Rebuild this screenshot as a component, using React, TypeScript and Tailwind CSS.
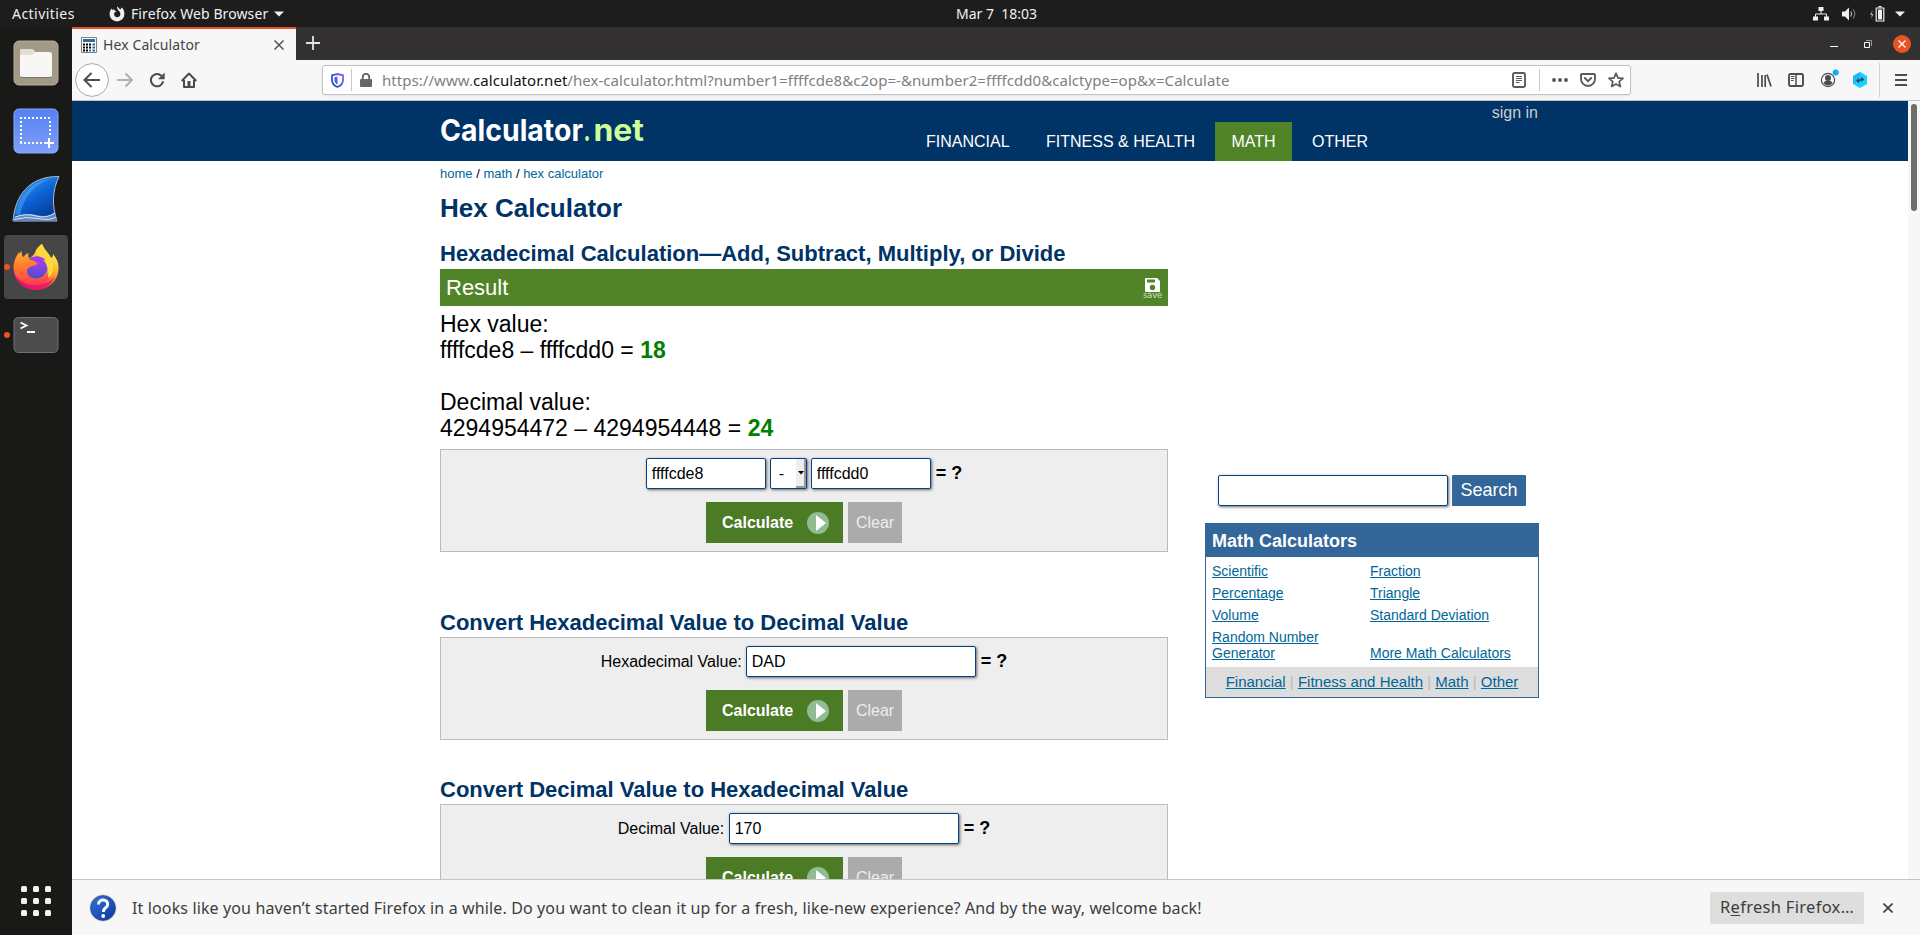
import React from 'react';
import type { ReactNode } from 'react';

const UI = "font-['Noto_Sans','Open_Sans',sans-serif]";

function TopBar() {
  return (
    <div className={`flex h-[27px] shrink-0 items-center bg-[#1d1d1d] text-[14px] leading-none text-[#f0f0f0] ${UI}`}>
      <span className="ml-3 w-[97px] whitespace-pre tracking-[0.45px]">Activities</span>
      <svg width="16" height="16" viewBox="0 0 16 16">
        <path
          d="M8 .5 C10 1.6 9.6 2.6 11.4 3.4 L12.8 1.6 C14.6 3 15.4 5.4 15.4 8 A7.4 7.4 0 0 1 .6 8 C.6 5.6 1.6 3.8 2.8 2.6 L3.4 4 L5.2 3.2 L5.8 4.8 L7.6 5.4 L5.6 6.6 C4.2 8.6 5.8 11.2 8.2 11.2 C11 11.2 12.2 8.4 10.8 6 C10 4.8 7.8 3.4 8 .5Z"
          fill="#f0f0f0"
        />
      </svg>
      <span className="ml-[6px] w-[143px] whitespace-pre tracking-[0.1px]">Firefox Web Browser</span>
      <svg width="10" height="6" viewBox="0 0 10 6">
        <path d="M0 .5H10L5 5.5Z" fill="#f0f0f0" />
      </svg>
      <span className="ml-[672px] w-[90px] whitespace-pre">{'Mar 7  18:03'}</span>
      <div className="ml-auto mr-[15px] flex items-center">
        <svg width="16" height="14" viewBox="0 0 16 14">
          <path d="M5.5 0h5v4h-5zM0 9.5h5v4H0zM11 9.5h5v4h-5z" fill="#f0f0f0" />
          <path d="M8 4v3M2.5 10V7h11v3" fill="none" stroke="#f0f0f0" strokeWidth="1" />
        </svg>
        <svg className="ml-[12px]" width="16" height="14" viewBox="0 0 16 14">
          <path d="M1 4.5h3L8 .5v13L4 9.5H1z" fill="#f0f0f0" />
          <path d="M9.8 4.5q1.6 2.5 0 5" fill="none" stroke="#c0c0c0" strokeWidth="1.2" />
          <path d="M12 2.5q3.6 4.5 0 9" fill="none" stroke="#777" strokeWidth="1.2" />
        </svg>
        <svg className="ml-[12px]" width="16" height="16" viewBox="0 0 16 16">
          <path d="M3.5 4 1 9h1.8L2 13l2.8-5H3z" fill="#999" />
          <path d="M7.2 2h7.6v13H7.2z" fill="none" stroke="#f0f0f0" strokeWidth="1.2" />
          <path d="M9 3.5h4v10H9zM9.5 0h3v1.5h-3z" fill="#f0f0f0" />
        </svg>
        <svg className="ml-[10px]" width="10" height="6" viewBox="0 0 10 6">
          <path d="M0 .5H10L5 5.5Z" fill="#f0f0f0" />
        </svg>
      </div>
    </div>
  );
}

function DockItem({ children, active, running }: { children: ReactNode; active?: boolean; running?: boolean }) {
  return (
    <div className="relative flex h-[68px] w-[72px] items-center justify-center">
      {active && <div className="absolute left-1 top-[2px] h-16 w-16 rounded-[4px] bg-[#464646]" />}
      {running && <div className="absolute left-1 top-[31px] h-[6px] w-[6px] rounded-full bg-[#e95420]" />}
      <div className="relative">{children}</div>
    </div>
  );
}

function FirefoxLogo() {
  return (
    <svg width="46" height="48" viewBox="0 0 46 48" className="block">
      <defs>
        <linearGradient id="fxBody" x1="0.8" y1="0.1" x2="0.25" y2="1">
          <stop offset="0" stopColor="#fff44f" />
          <stop offset="0.35" stopColor="#ffb02e" />
          <stop offset="0.65" stopColor="#ff5a3c" />
          <stop offset="1" stopColor="#e3087f" />
        </linearGradient>
        <radialGradient id="fxGlobe" cx="0.6" cy="0.25" r="0.8">
          <stop offset="0" stopColor="#a83cf0" />
          <stop offset="1" stopColor="#4a50c8" />
        </radialGradient>
        <linearGradient id="fxEar" x1="0" y1="0" x2="0.1" y2="1">
          <stop offset="0" stopColor="#ffb52e" />
          <stop offset="0.45" stopColor="#ff7a2e" />
          <stop offset="1" stopColor="#ff3c50" />
        </linearGradient>
      </defs>
      <path d="M29 1C31 7 36 10 38 15C40 14 40 12 40 11C44 16 46 20 45.5 26C45 38 35 47 23 47C10 47 .5 37 .5 25C.5 19 3 13 6 9C6 14 8 16 12 17C18 16 22 11 23 7C25 4 27 2 29 1Z" fill="url(#fxBody)" />
      <circle cx="23.5" cy="24.5" r="11" fill="url(#fxGlobe)" />
      <path d="M.8 22C2 15 5 12 8.500 8C9 11 9 13 10.500 14C12 12 13.500 10.500 15.500 10C15 13 15.500 15.500 17.500 17C21 17.500 24 19 24.500 20.500C22.500 23.500 17 22.500 14.500 26C13 30 15 34 19 36C26 38.500 34 35 36 27C39 35 34 43 23 43C10 43 0 35 .8 22Z" fill="url(#fxEar)" />
      <path d="M29 1C31 7 36 10 38 15C42 22 41 31 35 35C36 27 34 20 29 16C25 13 24 11 23 9C25 5 27 3 29 1Z" fill="#ffd93b" />
      <path d="M17 16.500C21 12.500 29 12 33 17.500C30.500 16.500 28 16 25 18C23 18 20 17 17 16.500Z" fill="#a63bea" />
      <path d="M3 33C10 44 33 46 42 33C38 43 31 47 23 47C14 47 7 42 3 33Z" fill="#e80f70" opacity=".75" />
    </svg>
  );
}

function Dock() {
  return (
    <div className="flex w-[72px] shrink-0 flex-col bg-[#191917] pt-[2px]">
      <DockItem>
        <svg width="46" height="46" viewBox="0 0 46 46" className="block">
          <rect x="1" y="1" width="44" height="44" rx="5" fill="#a29a86" stroke="#b5ae9c" />
          <path d="M7 15V11q0-2 2-2h10l3 3h12v5z" fill="#e2ded4" />
          <rect x="7" y="12" width="32" height="25" rx="2.500" fill="#f8f7f5" />
          <path d="M7 12V11q0-2 2-2h10q2 0 3 3l-3 3H7z" fill="#e2ded4" />
          <path d="M8 37.500h30" stroke="#7d7564" />
        </svg>
      </DockItem>
      <DockItem>
        <svg width="46" height="46" viewBox="0 0 46 46" className="block">
          <defs>
            <linearGradient id="shot" x1="0" y1="0" x2="0" y2="1">
              <stop offset="0" stopColor="#5480f2" />
              <stop offset="1" stopColor="#7ea0fa" />
            </linearGradient>
          </defs>
          <rect x="1" y="1" width="44" height="44" rx="5" fill="url(#shot)" stroke="#8cabff" />
          <path d="M7 10H38M7 35H31M8 13V34M37 13V29" fill="none" stroke="#fff" strokeWidth="2" strokeDasharray="2 2" />
          <path d="M36 30v10M31 35h10" stroke="#fff" strokeWidth="2" />
        </svg>
      </DockItem>
      <DockItem>
        <svg width="48" height="46" viewBox="0 0 48 46" className="block">
          <defs>
            <linearGradient id="fin" x1="0.2" y1="0" x2="0.8" y2="1">
              <stop offset="0" stopColor="#2f9cf5" />
              <stop offset="0.5" stopColor="#0b5fd0" />
              <stop offset="1" stopColor="#063488" />
            </linearGradient>
          </defs>
          <path d="M1 45C3 20 17 0 47 .5C40 15 40 30 45 45Z" fill="url(#fin)" stroke="#aebbd0" strokeWidth="1" />
          <path d="M3 38C8 18 20 5 38 3C22 9 12 20 8 39Z" fill="#5bb4fa" opacity=".45" />
          <path d="M2 41Q14 36 25 39T43 36L45 45H1Z" fill="#5f87c8" />
          <path d="M3 41Q14 37 24 40T43 37M2 43.500Q14 40 26 42.500T44 41" fill="none" stroke="#dce8f8" strokeWidth="1" />
        </svg>
      </DockItem>
      <DockItem active running>
        <FirefoxLogo />
      </DockItem>
      <DockItem running>
        <svg width="46" height="38" viewBox="0 0 46 38" className="block">
          <rect x="1" y="1.500" width="44" height="35" rx="4.500" fill="#4c4c4c" stroke="#727272" />
          <path d="M7.500 6.500 13.500 9.500 7.500 12.500M14 16h8" fill="none" stroke="#fff" strokeWidth="1.800" />
        </svg>
      </DockItem>
      <div className="mb-[19px] ml-[21px] mt-auto grid w-[30px] grid-cols-3 gap-[6px]">
        {Array.from({ length: 9 }, (_, i) => (
          <span key={i} className="h-[6px] w-[6px] rounded-[1.5px] bg-[#f2f2f0]" />
        ))}
      </div>
    </div>
  );
}

function TabStrip() {
  return (
    <div className="flex h-[33px] shrink-0 bg-[#333031]">
      <div className="flex w-[224px] items-center border-t-2 border-[#e95420] bg-[#f7f7f7]">
        <svg className="ml-[9px]" width="16" height="16" viewBox="0 0 16 16">
          <path d="M.5.5h15v15H.5z" fill="#fff" stroke="#808080" />
          <path d="M2 2h12v3H2z" fill="#336699" />
          <path d="M2 6.500h2v2H2zM5 6.500h2v2H5zM8 6.500h2v2H8zM2 9.500h2v2H2zM5 9.500h2v2H5zM8 9.500h2v2H8zM2 12.500h2v2H2zM5 12.500h2v2H5z" fill="#000" />
          <path d="M11.500 6.500h2.500v2h-2.500zM11.500 9.500h2.500v2h-2.500zM11.500 12.500h2.500v2h-2.500zM8 12.500h2v2H8z" fill="#336699" />
        </svg>
        <span className={`ml-[6px] w-[171px] text-[14px] leading-none tracking-[0.1px] text-[#444] ${UI}`}>Hex Calculator</span>
        <svg width="10" height="10" viewBox="0 0 10 10">
          <path d="M.5.5l9 9M9.500.5l-9 9" stroke="#555" strokeWidth="1.500" />
        </svg>
      </div>
      <svg className="ml-[10px] mt-[9px]" width="14" height="14" viewBox="0 0 14 14">
        <path d="M7 0v14M0 7h14" stroke="#e4e4e4" strokeWidth="1.800" />
      </svg>
      <div className="ml-auto mr-[9px] flex items-center">
        <svg width="8" height="6" viewBox="0 0 8 6">
          <path d="M0 5.500h8" stroke="#fff" />
        </svg>
        <svg className="ml-[26px]" width="8" height="8" viewBox="0 0 8 8">
          <path d="M.5 2.500h5v5h-5z" fill="none" stroke="#fff" />
          <path d="M2 .5h5.500V6" fill="none" stroke="#999" />
        </svg>
        <svg className="ml-[21px]" width="18" height="18" viewBox="0 0 18 18">
          <circle cx="9" cy="9" r="9" fill="#e95420" />
          <path d="M5.500 5.500l7 7M12.500 5.500l-7 7" stroke="#fff" strokeWidth="1.300" />
        </svg>
      </div>
    </div>
  );
}

function Toolbar() {
  return (
    <div className="flex h-[41px] shrink-0 items-center border-b border-[#c4c4c4] bg-[#f7f7f7]">
      <svg className="ml-[3px]" width="34" height="34" viewBox="0 0 34 34">
        <circle cx="17" cy="17" r="16.400" fill="#fff" stroke="#aaa" />
        <path d="M25 17H10M16.500 10 9.500 17l7 7" fill="none" stroke="#4c4c4c" strokeWidth="2" />
      </svg>
      <svg className="ml-[8px]" width="16" height="16" viewBox="0 0 16 16">
        <path d="M0 8h15M8.500 1.500 15 8l-6.500 6.500" fill="none" stroke="#b0b0b0" strokeWidth="2" />
      </svg>
      <svg className="ml-[16px]" width="16" height="16" viewBox="0 0 16 16">
        <path d="M14.200 9.300A6.200 6.200 0 1 1 12.500 3.700" fill="none" stroke="#4c4c4c" strokeWidth="2" />
        <path d="M15.600.6v6.600H9z" fill="#4c4c4c" />
      </svg>
      <svg className="ml-[16px]" width="16" height="16" viewBox="0 0 16 16">
        <path d="M.7 9 8 1.500 15.300 9M3 8v7h10V8" fill="none" stroke="#4c4c4c" strokeWidth="2" strokeLinejoin="round" />
        <path d="M6.500 9h3v6h-3z" fill="#4c4c4c" />
      </svg>
      <div className="ml-[125px] flex h-[30px] w-[1309px] items-center rounded-[3px] border border-[#c2c2c2] bg-white shadow-[0_1px_3px_rgba(0,0,0,0.08)]">
        <svg className="ml-[8px]" width="13" height="15" viewBox="0 0 13 15">
          <defs>
            <linearGradient id="shield" x1="1" y1="0" x2="0" y2="1">
              <stop offset="0" stopColor="#9059ff" />
              <stop offset="1" stopColor="#0250bb" />
            </linearGradient>
          </defs>
          <path d="M6.500 1 12 2.300V6.500C12 10.500 9.500 13 6.500 14C3.500 13 1 10.500 1 6.500V2.300Z" fill="none" stroke="url(#shield)" strokeWidth="1.800" />
          <path d="M6.500 3.500V11.500C4.500 10.500 3.500 9 3.500 6.500V4.200Z" fill="url(#shield)" />
        </svg>
        <span className="ml-[7px] h-[22px] w-px bg-[#c8c8c8]" />
        <svg className="ml-[8px]" width="12" height="14" viewBox="0 0 12 14">
          <path d="M2.800 7V4a3.200 3.200 0 0 1 6.400 0v3" fill="none" stroke="#666" strokeWidth="1.900" />
          <rect x="0" y="6" width="12" height="8" rx="1" fill="#666" />
        </svg>
        <span className={`ml-[10px] w-[1130px] whitespace-pre text-[15px] leading-none tracking-[0.045px] text-[#808080] ${UI}`}>
          https://www.<span className="text-[#111]">calculator.net</span>/hex-calculator.html?number1=ffffcde8&amp;c2op=-&amp;number2=ffffcdd0&amp;calctype=op&amp;x=Calculate
        </span>
        <svg width="14" height="16" viewBox="0 0 14 16">
          <rect x="1" y="1" width="12" height="14" rx="1.500" fill="none" stroke="#5a5a5a" strokeWidth="1.900" />
          <path d="M4 4.500h6M4 6.500h6M4 8.500h6M4 10.500h3.500" stroke="#5a5a5a" />
        </svg>
        <span className="ml-[13px] h-[22px] w-px bg-[#c8c8c8]" />
        <svg className="ml-[12px]" width="16" height="4" viewBox="0 0 16 4">
          <circle cx="2" cy="2" r="2" fill="#5a5a5a" />
          <circle cx="8" cy="2" r="2" fill="#5a5a5a" />
          <circle cx="14" cy="2" r="2" fill="#5a5a5a" />
        </svg>
        <svg className="ml-[12px]" width="16" height="14" viewBox="0 0 16 14">
          <path d="M2 1h12q1 0 1 1v4a7 7 0 0 1-14 0V2q0-1 1-1z" fill="none" stroke="#5a5a5a" strokeWidth="1.900" />
          <path d="M4.800 5 8 8.200 11.200 5" fill="none" stroke="#5a5a5a" strokeWidth="1.900" strokeLinecap="round" />
        </svg>
        <svg className="ml-[12px]" width="16" height="16" viewBox="0 0 16 16">
          <path d="M8 1.300 10 5.900 15 6.400 11.200 9.700 12.400 14.600 8 12 3.600 14.600 4.800 9.700 1 6.400 6 5.900Z" fill="none" stroke="#5a5a5a" strokeWidth="1.700" strokeLinejoin="round" />
        </svg>
      </div>
      <div className="ml-auto mr-[13px] flex items-center">
        <svg width="15" height="14" viewBox="0 0 15 14">
          <path d="M1 0v14M5 2v12M8.200 2v12M10 1.500l4 12" stroke="#4c4c4c" strokeWidth="1.700" />
        </svg>
        <svg className="ml-[16px]" width="16" height="14" viewBox="0 0 16 14">
          <rect x="1" y="1" width="14" height="12" rx="1.500" fill="none" stroke="#4c4c4c" strokeWidth="1.900" />
          <path d="M8 1v12" stroke="#4c4c4c" strokeWidth="1.500" />
          <path d="M3 3.500h3.500M3 5.500h3.500M3 7.500h2.500" stroke="#4c4c4c" />
        </svg>
        <svg className="mb-[4px] ml-[16px]" width="19" height="20" viewBox="0 0 19 20">
          <circle cx="8" cy="12" r="6.600" fill="none" stroke="#4c4c4c" strokeWidth="1.200" />
          <circle cx="8" cy="10" r="3" fill="#4c4c4c" />
          <path d="M3.500 15q1-2.500 4.500-2.500t4.500 2.500q-2 2.500-4.500 2.500T3.500 15z" fill="#4c4c4c" />
          <circle cx="15.700" cy="4.600" r="3" fill="#00b0ff" />
        </svg>
        <svg className="ml-[13px]" width="16" height="16" viewBox="0 0 16 16">
          <path d="M8 0 15 4v8l-7 4-7-4V4z" fill="#12d4ff" />
          <path d="M1 4 8 0v8l-7 4z" fill="#22b4ff" />
          <path d="M4 8.700 7 6v1.700h1.500v1.800H7v1.800zM12.300 7.500 9.300 4.800v1.700H8v1.900h1.300v1.700z" fill="#33455c" />
        </svg>
        <span className="ml-[11px] h-[34px] w-px bg-[#d4d4d4]" />
        <svg className="ml-[15px]" width="12" height="12" viewBox="0 0 12 12">
          <path d="M0 1h12M0 6h12M0 11h12" stroke="#4c4c4c" strokeWidth="2" />
        </svg>
      </div>
    </div>
  );
}

function SiteHeader() {
  return (
    <div className="flex h-[60px] shrink-0 justify-center bg-[#003366]">
      <div className="flex w-[1100px]">
        <svg width="210" height="60" viewBox="0 0 210 60" className="shrink-0">
          <g fontFamily="Inter, 'Liberation Sans', sans-serif" fontWeight="700" fontSize="30">
            <text x="0" y="40" textLength="143" lengthAdjust="spacingAndGlyphs" fill="#fff">Calculator</text>
            <text x="143.500" y="40" textLength="7" lengthAdjust="spacingAndGlyphs" fill="#ccff99">.</text>
            <text x="153.500" y="40" textLength="50.500" lengthAdjust="spacingAndGlyphs" fill="#ccff99">net</text>
          </g>
        </svg>
        <div className="flex flex-1 flex-col">
          <a className="mr-[2px] mt-[3px] self-end text-[16px] leading-[18px] text-[#ccc]">sign in</a>
          <nav className="ml-[260px] flex h-[39px] text-[16px] leading-[39px] text-white">
            <a className="w-[96px] pl-4">FINANCIAL</a>
            <a className="ml-[24px] w-[185px] whitespace-nowrap pl-4">FITNESS &amp; HEALTH</a>
            <a className="w-[77px] bg-[#518428] text-center">MATH</a>
            <a className="pl-5">OTHER</a>
          </nav>
        </div>
      </div>
    </div>
  );
}

const field = 'h-[31px] rounded-[2px] border border-[#044284] bg-white pl-[5px] text-[16px] leading-[29px] shadow-[1px_1px_3px_#666]';

function CalcButtons() {
  return (
    <div className="mt-[13px] flex justify-center gap-[5px]">
      <button className="flex h-[41px] w-[137px] items-center bg-[#4c7b25] pl-[16px] text-[16px] font-bold text-white">
        Calculate
        <svg className="ml-[14px]" width="22" height="22" viewBox="0 0 22 22">
          <circle cx="11" cy="11" r="11" fill="#90bc93" />
          <path d="M9 3v16l10-8z" fill="#fff" />
        </svg>
      </button>
      <button className="h-[41px] w-[54px] bg-[#ababab] text-[16px] text-[#eee]">Clear</button>
    </div>
  );
}

function Panel({ children }: { children: ReactNode }) {
  return (
    <div className="h-[103px] border border-[#bbb] bg-[#eee] pt-[8px]">
      <div className="flex justify-center">
        {children}
        <b className="ml-[5px] mt-[5px] text-[18px] leading-[21px]">= ?</b>
      </div>
      <CalcButtons />
    </div>
  );
}

function H2({ children }: { children: ReactNode }) {
  return <h2 className="text-[22px] font-bold leading-[26px] text-[#003366]">{children}</h2>;
}

function Main() {
  return (
    <div className="w-[728px]">
      <div className="mt-[5px] text-[13px] leading-[16px]">
        <a className="text-[#006699]">home</a> / <a className="text-[#006699]">math</a> / <a className="text-[#006699]">hex calculator</a>
      </div>
      <h1 className="mt-[11px] text-[26px] font-bold leading-[30px] text-[#003366]">Hex Calculator</h1>
      <div className="mt-[18px]">
        <H2>Hexadecimal Calculation—Add, Subtract, Multiply, or Divide</H2>
      </div>
      <div className="mt-[2px] flex h-[37px] items-center justify-between bg-[#518428] pl-[6px] pr-[6px] text-[22px] leading-none text-white">
        <span>Result</span>
        <span className="flex flex-col items-center pt-[1px]">
          <svg width="15" height="14" viewBox="0 0 15 14">
            <path d="M1 0h11l3 3v11H1q-1 0-1-1V1q0-1 1-1z" fill="#fff" />
            <path d="M2 1.500h8v3H2z" fill="#518428" />
            <circle cx="7.500" cy="9.500" r="2.700" fill="#518428" />
          </svg>
          <span className="font-['DejaVu_Sans',sans-serif] text-[8.5px] leading-[7px] tracking-[-0.2px] text-[#cfe0c0]">save</span>
        </span>
      </div>
      <div className="mt-[5px] text-[23px] leading-[26px]">
        <p>Hex value:</p>
        <p>ffffcde8 – ffffcdd0 = <b className="text-[#008000]">18</b></p>
        <p>&nbsp;</p>
        <p>Decimal value:</p>
        <p>4294954472 – 4294954448 = <b className="text-[#008000]">24</b></p>
      </div>
      <div className="mt-[8px]">
        <Panel>
          <div className={`${field} w-[120px]`}>ffffcde8</div>
          <div className="ml-[4px] flex h-[31px] w-[37px] justify-between rounded-[2px] border border-[#044284] bg-white pl-[8px] text-[16px] leading-[29px] shadow-[1px_1px_3px_#666]">
            -
            <span className="flex h-[29px] w-[10px] items-center border-b-2 border-r-2 border-b-[#999] border-r-[#999] bg-[#eee] pl-[2px]">
              <svg width="6" height="4" viewBox="0 0 6 4" className="shrink-0">
                <path d="M0 0h6L3 3.500z" fill="#000" />
              </svg>
            </span>
          </div>
          <div className={`${field} ml-[4px] w-[120px]`}>ffffcdd0</div>
        </Panel>
      </div>
      <div className="mt-[58px]">
        <H2>Convert Hexadecimal Value to Decimal Value</H2>
      </div>
      <div className="mt-[1px]">
        <Panel>
          <span className="mr-[4px] text-[16px] leading-[31px]">Hexadecimal Value:</span>
          <div className={`${field} w-[230px]`}>DAD</div>
        </Panel>
      </div>
      <div className="mt-[37px]">
        <H2>Convert Decimal Value to Hexadecimal Value</H2>
      </div>
      <div className="mt-[1px]">
        <Panel>
          <span className="mr-[4.5px] text-[16px] leading-[31px]">Decimal Value:</span>
          <div className={`${field} w-[230px]`}>170</div>
        </Panel>
      </div>
    </div>
  );
}

function Sidebar() {
  const rows = [
    ['Scientific', 'Fraction'],
    ['Percentage', 'Triangle'],
    ['Volume', 'Standard Deviation'],
    ['Random Number Generator', 'More Math Calculators'],
  ];
  const footer = ['Financial', 'Fitness and Health', 'Math', 'Other'];
  return (
    <div className="ml-[37px] mt-[314px] w-[334px]">
      <div className="flex gap-[4px] pl-[13px]">
        <div className={`${field} w-[230px]`} />
        <button className="h-[31px] w-[74px] rounded-[1px] bg-[#336699] text-[18px] leading-[31px] text-white">Search</button>
      </div>
      <div className="mt-[17px] border border-[#336699]">
        <div className="h-[33px] bg-[#336699] pl-[6px] text-[18px] font-bold leading-[34px] text-white">Math Calculators</div>
        <div className="flex h-[110px] flex-col gap-y-[6px] pl-[6px] pt-[6px] text-[14px] leading-[16px] text-[#006699] underline">
          {rows.map(([a, b]) => (
            <div key={a} className="flex items-end">
              <a className="w-[158px] pr-[40px]">{a}</a>
              <a>{b}</a>
            </div>
          ))}
        </div>
        <div className="flex h-[30px] justify-center whitespace-pre bg-[#ddd] text-[15px] leading-[30px] text-[#bbb]">
          {footer.map((f, i) => (
            <span key={f}>
              {i > 0 && ' | '}
              <a className="text-[#006699] underline">{f}</a>
            </span>
          ))}
        </div>
      </div>
    </div>
  );
}

function NotificationBar() {
  return (
    <div className={`flex h-[56px] shrink-0 items-center border-t border-[#c4c4c4] bg-[#f7f7f7] text-[16px] leading-none text-[#3d3d3d] ${UI}`}>
      <svg className="ml-[17px]" width="28" height="28" viewBox="0 0 28 28">
        <defs>
          <linearGradient id="help" x1="0" y1="0" x2="1" y2="1">
            <stop offset="0" stopColor="#3b74d8" />
            <stop offset="0.5" stopColor="#1e55c0" />
            <stop offset="1" stopColor="#0a3a9c" />
          </linearGradient>
        </defs>
        <circle cx="14" cy="14" r="13.500" fill="#c9cac8" />
        <circle cx="14" cy="14" r="12.300" fill="url(#help)" stroke="#173f94" strokeWidth=".8" />
        <path d="M9.500 10.500C9.500 4.500 19 4.500 18.700 10.500C18.500 14 14.300 13.600 14.300 18" fill="none" stroke="#fff" strokeWidth="3" />
        <circle cx="14.200" cy="22" r="1.900" fill="#fff" />
      </svg>
      <span className="ml-[15px] whitespace-pre tracking-[0.13px]">
        It looks like you haven’t started Firefox in a while. Do you want to clean it up for a fresh, like-new experience? And by the way, welcome back!
      </span>
      <button className="ml-auto h-[32px] w-[154px] whitespace-pre rounded-[2px] bg-[#dedede] text-[16.5px] tracking-[0.3px]">
        R<span className="underline underline-offset-2">e</span>fresh Firefox…
      </button>
      <svg className="ml-[19px] mr-[27px]" width="10" height="10" viewBox="0 0 10 10">
        <path d="M.5.5l9 9M9.500.5l-9 9" stroke="#3d3d3d" strokeWidth="1.600" />
      </svg>
    </div>
  );
}

export default function App() {
  return (
    <div className="flex h-[935px] w-[1920px] flex-col overflow-hidden bg-white font-['Liberation_Sans',Arial,sans-serif] text-black">
      <TopBar />
      <div className="flex min-h-0 flex-1">
        <Dock />
        <div className="flex min-w-0 flex-1 flex-col">
          <TabStrip />
          <Toolbar />
          <div className="flex min-h-0 flex-1 overflow-hidden">
            <div className="flex flex-1 flex-col">
              <SiteHeader />
              <div className="flex justify-center">
                <div className="flex w-[1100px] items-start">
                  <Main />
                  <Sidebar />
                </div>
              </div>
            </div>
            <div className="w-[12px] shrink-0 bg-[#f7f7f7] pl-[3px] pt-[3px]">
              <div className="h-[107px] w-[6px] rounded-full bg-[#6e6e6e]" />
            </div>
          </div>
          <NotificationBar />
        </div>
      </div>
    </div>
  );
}
